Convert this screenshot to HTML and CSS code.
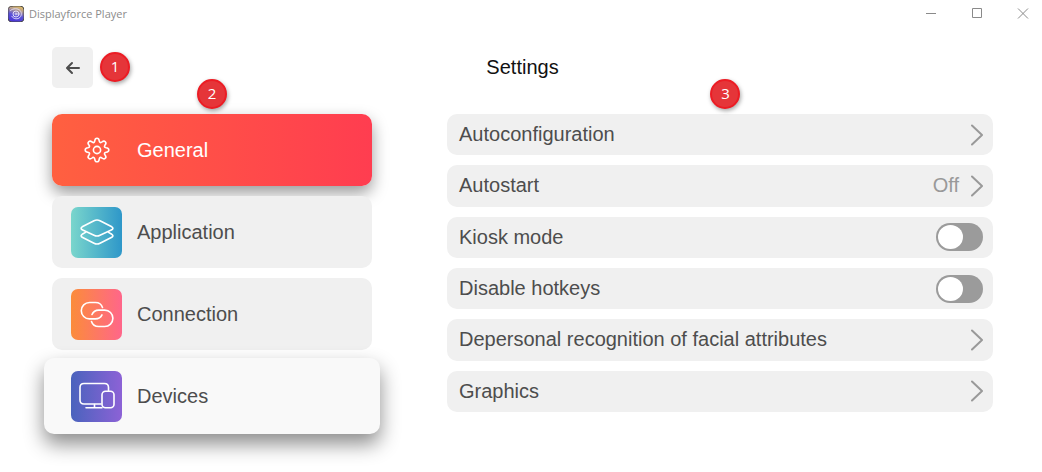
FILE: index.html
```html
<!DOCTYPE html>
<html lang="en">
<head>
  <meta charset="UTF-8" />
  <meta name="viewport" content="width=device-width, initial-scale=1.0"/>
  <title>Displayforce Player</title>
  <link rel="stylesheet" href="styles.css">
</head>
<body>
  <div class="titlebar">
    <svg class="logo" viewBox="0 0 16 16" aria-hidden="true">
      <defs>
        <linearGradient id="logoFill" x1="0.7" y1="0" x2="0.4" y2="1">
          <stop offset="0" stop-color="#e3bd62"/>
          <stop offset="0.25" stop-color="#b9a08c"/>
          <stop offset="0.6" stop-color="#5a52d8"/>
          <stop offset="1" stop-color="#4a35d6"/>
        </linearGradient>
      </defs>
      <rect width="16" height="16" rx="4" fill="url(#logoFill)"/>
      <g fill="none" stroke="#e4e0fa">
        <path d="M2.500 4.500C5 2.200 10 2 12.200 4.600c2 2.400 1.300 6-1.200 7.500-2.600 1.500-6 .5-7.200-1.800" stroke-width="0.9"/>
        <circle cx="8" cy="8" r="3" stroke-width="1"/>
        <circle cx="8" cy="8" r="1" stroke-width="0.8"/>
      </g>
    </svg>
    <span class="app-name">Displayforce Player</span>
    <div class="window-buttons">
      <button aria-label="Minimize">
        <svg viewBox="0 0 12 12"><path d="M1 5.500h10"/></svg>
      </button>
      <button aria-label="Maximize">
        <svg viewBox="0 0 12 12"><path d="M1.500 0.500h9v9h-9z"/></svg>
      </button>
      <button aria-label="Close">
        <svg viewBox="0 0 12 12"><path d="M1 0.500l10 10M11 0.500L1 10.500"/></svg>
      </button>
    </div>
  </div>

  <header class="header">
    <div class="back-wrap">
      <button class="back" aria-label="Back">
        <svg viewBox="0 0 16 14"><path d="M14 7H2.500M7 2L2 7l5 5"/></svg>
      </button>
      <span class="badge badge-back">1</span>
    </div>
    <h1>Settings</h1>
  </header>

  <main class="content">
    <nav class="menu">
      <span class="badge badge-menu">2</span>
      <button class="menu-item active">
        <span class="tile">
          <svg viewBox="0 0 36 36">
            <circle cx="18" cy="18" r="3.600"/>
            <path d="M15.800 8.800 Q16 6.200 18 6.200 T20.200 8.800 Q20.500 10.200 21.300 10.500 T22.900 10 Q24.900 8.300 26.300 9.700 T26 13.100 Q25.200 14.300 25.500 14.900 T27.200 15.800 Q29.800 16 29.800 18 T27.200 20.200 Q25.800 20.500 25.500 21.300 T26 22.900 Q27.700 24.900 26.300 26.300 T22.900 26 Q21.700 25.200 21.100 25.500 T20.200 27.200 Q20 29.800 18 29.800 T15.800 27.200 Q15.500 25.800 14.700 25.500 T13.100 26 Q11.100 27.700 9.700 26.300 T10 22.900 Q10.800 21.700 10.500 21.100 T8.800 20.200 Q6.200 20 6.200 18 T8.800 15.800 Q10.200 15.500 10.500 14.700 T10 13.100 Q8.300 11.100 9.700 9.700 T13.100 10 Q14.300 10.800 14.900 10.500 T15.800 8.800z"/>
          </svg>
        </span>
        General
      </button>
      <button class="menu-item">
        <span class="tile application">
          <svg viewBox="0 0 36 36">
            <path d="M3.200 12.800L15 6.700q3-1.500 6 0l11.800 6.100q2.200 1.500 0 3L21 21.300q-3 1.500-6 0L3.200 15.800q-2.200-1.500 0-3z"/>
            <path d="M6.500 18.400l-3.300 1.900q-2.200 1.500 0 3L15 29.300q3 1.500 6 0l11.800-6q2.200-1.500 0-3l-3.300-1.900"/>
          </svg>
        </span>
        Application
      </button>
      <button class="menu-item">
        <span class="tile connection">
          <svg viewBox="0 0 36 36">
            <path d="M23.500 11.500C22.500 8.300 20 6.500 16.500 6.500h-6a8.200 8.200 0 0 0 0 16.400h5.800c3 0 5.500-1.300 6.700-4"/>
            <path d="M13 18.500c1.200-2.800 3.700-4.400 6.700-4.400h6a8.200 8.200 0 0 1 0 16.400h-6c-3.500 0-6.200-1.800-7.200-5"/>
          </svg>
        </span>
        Connection
      </button>
      <button class="menu-item hovered">
        <span class="tile devices">
          <svg viewBox="0 0 36 36">
            <path d="M22 26H5q-4 0-4-4V9.500q0-4 4-4h20.500q4 0 4 4v3"/>
            <rect x="23" y="13.200" width="12" height="16.600" rx="3.500"/>
            <path d="M7 29.700h16M15.500 26.500v3"/>
          </svg>
        </span>
        Devices
      </button>
    </nav>

    <section class="settings">
      <span class="badge badge-list">3</span>
      <button class="row">
        <span class="label">Autoconfiguration</span>
        <svg class="chevron" viewBox="0 0 12 22"><path d="M1 1.500L11 11 1 20.500"/></svg>
      </button>
      <button class="row">
        <span class="label">Autostart</span>
        <span class="value">Off</span>
        <svg class="chevron" viewBox="0 0 12 22"><path d="M1 1.500L11 11 1 20.500"/></svg>
      </button>
      <label class="row">
        <span class="label">Kiosk mode</span>
        <input type="checkbox" class="toggle">
      </label>
      <label class="row">
        <span class="label">Disable hotkeys</span>
        <input type="checkbox" class="toggle">
      </label>
      <button class="row">
        <span class="label">Depersonal recognition of facial attributes</span>
        <svg class="chevron" viewBox="0 0 12 22"><path d="M1 1.500L11 11 1 20.500"/></svg>
      </button>
      <button class="row">
        <span class="label">Graphics</span>
        <svg class="chevron" viewBox="0 0 12 22"><path d="M1 1.500L11 11 1 20.500"/></svg>
      </button>
    </section>
  </main>
</body>
</html>
```
FILE: styles.css
```css
* {
  box-sizing: border-box;
}
body {
  margin: 0;
  background: #fff;
  color: #4d4d4d;
  font-family: "Liberation Sans", Arial, sans-serif;
  font-size: 20px;
}
button {
  border: none;
  background: none;
  padding: 0;
  color: inherit;
  font: inherit;
  text-align: left;
  cursor: pointer;
}
svg {
  display: block;
  fill: none;
  stroke: currentColor;
  stroke-linecap: round;
  stroke-linejoin: round;
}

/* window title bar */
.titlebar {
  display: flex;
  align-items: center;
  height: 27px;
  padding-left: 8px;
}
.logo {
  width: 16px;
  height: 16px;
  margin-right: 5px;
}
.app-name {
  flex: 1;
  color: #8c8c8c;
  font-family: "Open Sans", "Noto Sans", sans-serif;
  font-size: 11px;
}
.window-buttons {
  display: flex;
  gap: 8px;
}
.window-buttons button {
  display: flex;
  align-items: center;
  justify-content: center;
  width: 38px;
  height: 26px;
  color: #8a8a8a;
}
.window-buttons svg {
  width: 12px;
  height: 12px;
  stroke-linecap: butt;
  stroke-linejoin: miter;
}

/* header */
.header {
  display: grid;
  grid-template-columns: 1fr auto 1fr;
  align-items: center;
  padding: 20px 49px 26px 52px;
}
.header h1 {
  margin: 0;
  color: #111;
  font-size: 20px;
  font-weight: normal;
}
.back-wrap {
  position: relative;
  width: 41px;
}
.back {
  display: flex;
  align-items: center;
  justify-content: center;
  width: 41px;
  height: 41px;
  border-radius: 5px;
  background: #f0f0f0;
}
.back svg {
  width: 16px;
  height: 14px;
  stroke-width: 2;
}

/* numbered markers */
.badge {
  position: absolute;
  z-index: 2;
  display: flex;
  align-items: center;
  justify-content: center;
  width: 30px;
  height: 30px;
  padding-bottom: 2px;
  border: 2px solid #ec1c24;
  border-radius: 50%;
  background: #e53539;
  box-shadow: 1px 2px 4px rgba(0, 0, 0, 0.35);
  color: #fff;
  font-family: "Open Sans", "Noto Sans", sans-serif;
  font-size: 15px;
}
.badge-back {
  top: 5px;
  left: 48px;
}
.badge-menu,
.badge-list {
  top: -35px;
  left: 50%;
  transform: translateX(-50%);
}
.badge-list {
  left: 51%;
}

.content {
  display: grid;
  grid-template-columns: 320px 1fr;
  gap: 75px;
  align-items: start;
  padding: 0 49px 37px 52px;
}

/* left menu */
.menu {
  position: relative;
  display: flex;
  flex-direction: column;
  gap: 10px;
}
.menu-item {
  display: flex;
  align-items: center;
  gap: 15px;
  height: 72px;
  padding: 0 19px;
  border-radius: 10px;
  background: #f0f0f0;
}
.menu-item.active {
  background: linear-gradient(to right, #ff6040, #ff3d50);
  box-shadow: 0 7px 16px rgba(0, 0, 0, 0.4);
  color: #fff;
}
.menu-item.hovered {
  height: 76px;
  margin: -2px -8px;
  padding: 0 27px;
  background: #f9f9f9;
  box-shadow: 0 10px 20px rgba(0, 0, 0, 0.45);
}
.tile {
  display: flex;
  align-items: center;
  justify-content: center;
  width: 51px;
  height: 51px;
  border-radius: 7px;
  color: #fff;
}
.tile svg {
  width: 36px;
  height: 36px;
  stroke-width: 1.6;
}
.application {
  background: linear-gradient(to right, #7ad6cc, #2e97c9);
}
.connection {
  background: linear-gradient(to right, #fb8c3a, #ff668a);
}
.devices {
  background: linear-gradient(to right, #4a63bd, #8c62d6);
}

/* right list */
.settings {
  position: relative;
  display: grid;
  grid-auto-rows: 1fr;
  gap: 10px;
  min-height: 298px;
}
.row {
  display: flex;
  align-items: center;
  padding: 0 10px 0 12px;
  border-radius: 10px;
  background: #f0f0f0;
  cursor: pointer;
}
.label {
  flex: 1;
}
.value {
  margin-right: 12px;
  color: #999;
}
.chevron {
  width: 12px;
  height: 22px;
  color: #999;
  stroke-width: 2;
}
.toggle {
  appearance: none;
  width: 47px;
  height: 28px;
  margin: 0;
  padding: 2px;
  border-radius: 14px;
  background: #9b9b9b;
  cursor: pointer;
}
.toggle::before {
  content: "";
  display: block;
  width: 25px;
  height: 24px;
  border-radius: 50%;
  background: #fff;
}
.toggle:checked::before {
  margin-left: auto;
}
```
